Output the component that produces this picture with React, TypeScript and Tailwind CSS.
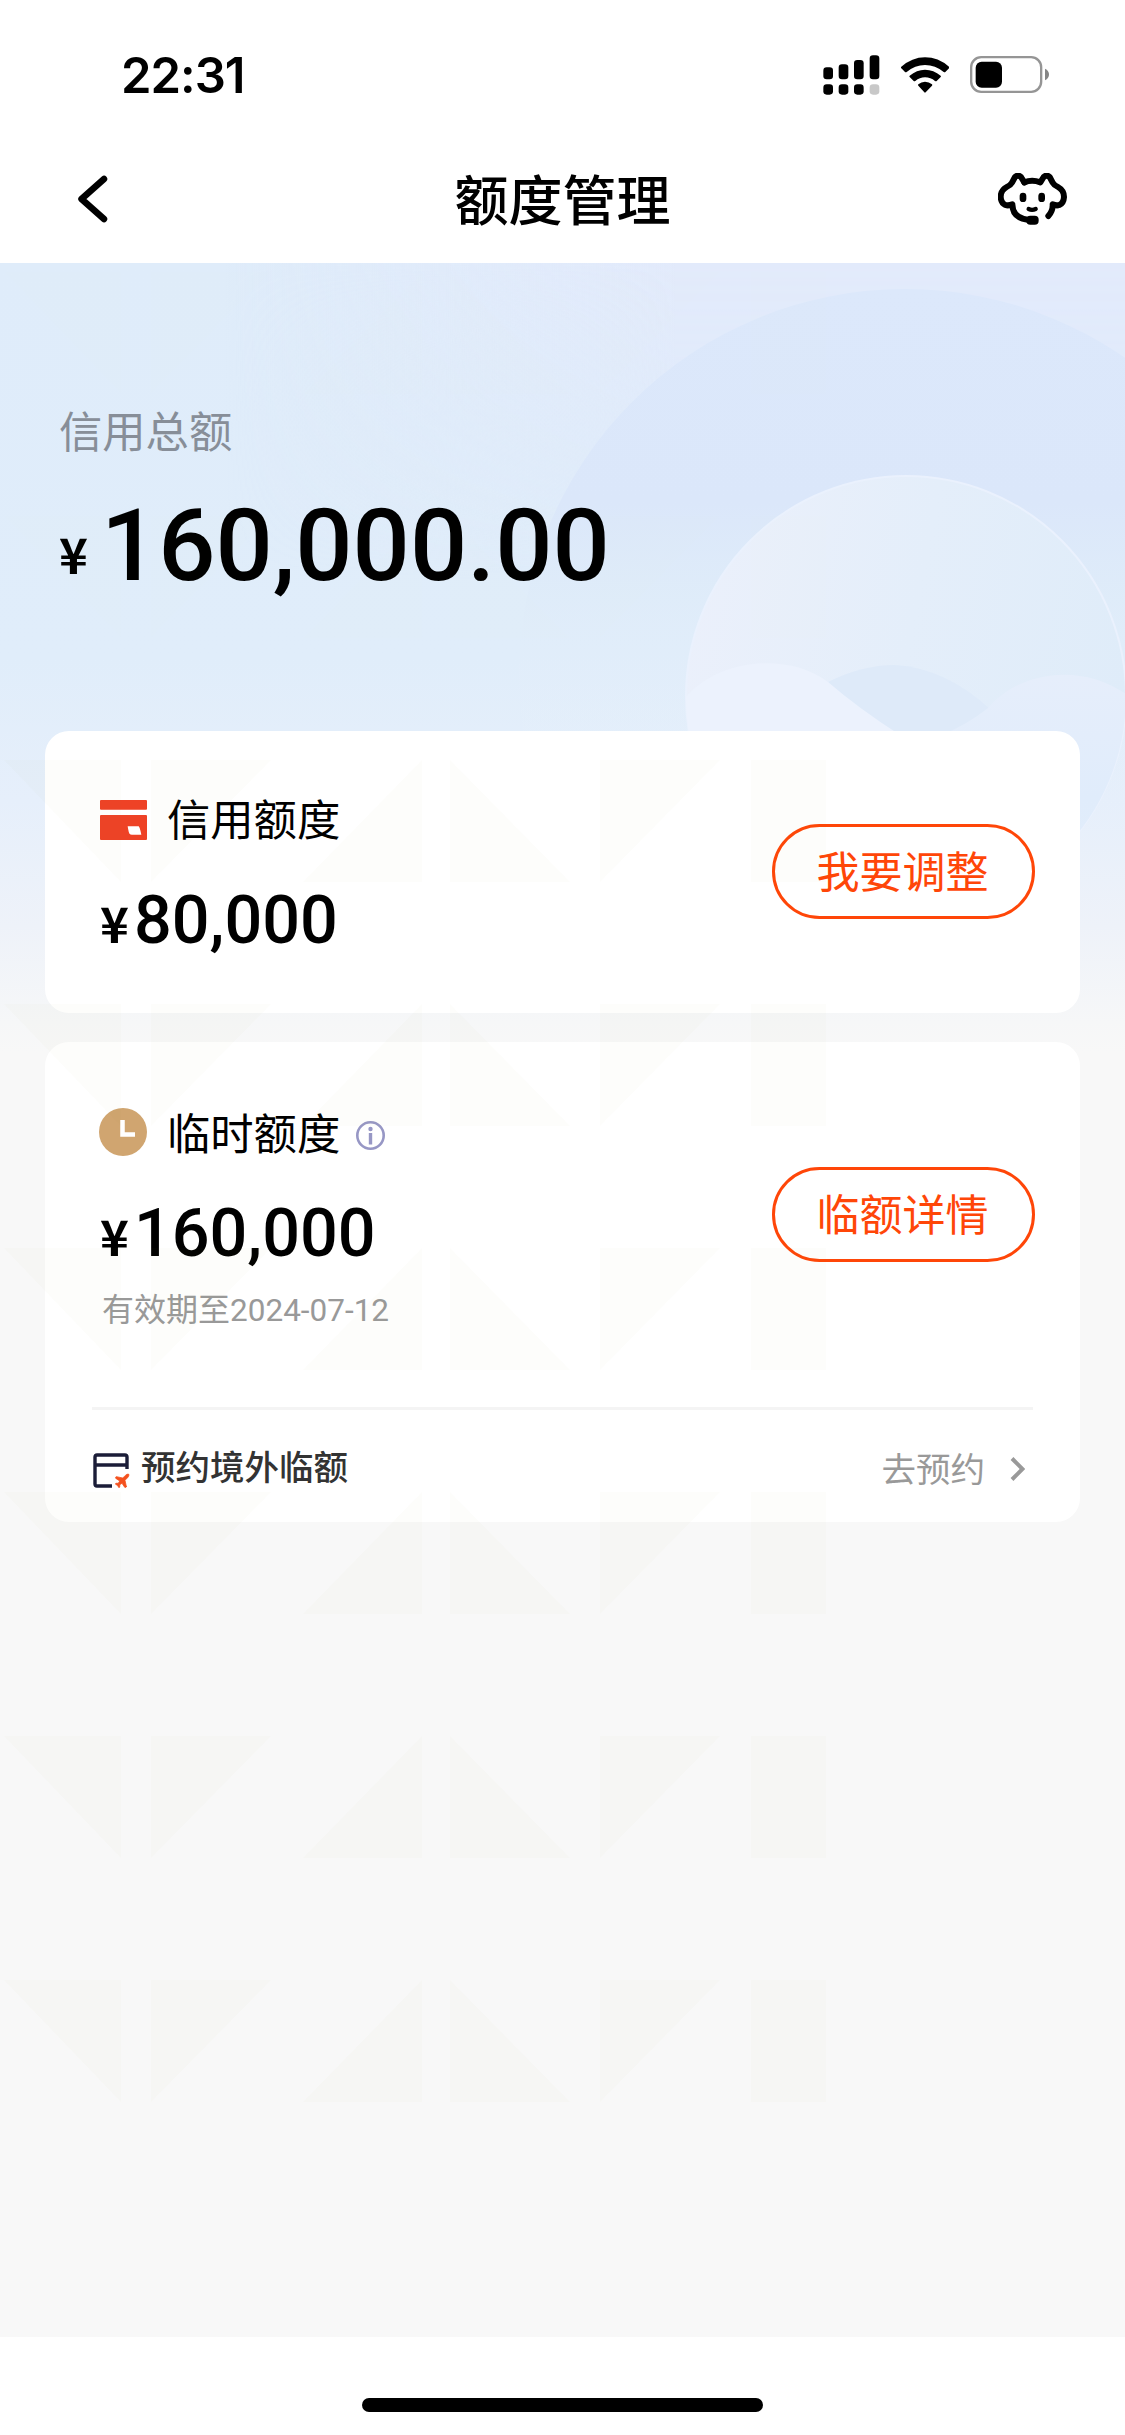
import { Plane } from "lucide-react";

// the first two rows sit on the blue hero and are fainter there
const watermarkRows = [272, 516, 760, 1004, 1248, 1492, 1736, 1980];

function SignalIcon() {
  return (
    <svg className="h-10 w-[57px]" viewBox="128 74 171 120">
      <rect x="129" y="111" width="29" height="36" rx="10" />
      <rect x="175" y="102" width="29" height="45" rx="10" />
      <rect x="221" y="89" width="29" height="58" rx="10" />
      <rect x="268" y="75" width="29" height="72" rx="10" />
      <rect x="129" y="162" width="29" height="31" rx="10" />
      <rect x="175" y="162" width="29" height="31" rx="10" />
      <rect x="221" y="162" width="29" height="31" rx="10" />
      <rect x="268" y="162" width="29" height="31" rx="10" fill="#c8c8c8" />
    </svg>
  );
}

function WifiIcon() {
  return (
    <svg className="h-9 w-12" viewBox="361 79 144 108">
      <path d="M361 109Q394 80 433 80Q473 80 506 109Q507 111 505 113L494 124Q492 126 489 124Q464 103 433 103Q403 103 378 124Q375 126 373 124L362 113Q360 111 361 109Z" />
      <path d="M387 135Q408 117 433 117Q459 117 480 135Q482 137 480 139L468 151Q466 153 463 151Q450 140 433 140Q417 140 404 151Q401 153 399 151L387 139Q385 137 387 135Z" />
      <path d="M413 161Q422 153 433 153Q445 153 454 161Q456 163 454 165L435 185Q433 187 431 185L413 165Q411 163 413 161Z" />
    </svg>
  );
}

function BatteryIcon() {
  return (
    <svg className="h-[37px] w-[79px]" viewBox="570 78 237 111">
      <rect
        x="573.500"
        y="81.500"
        width="210"
        height="104"
        rx="30"
        fill="none"
        stroke="#959595"
        strokeWidth="7"
      />
      <rect x="587" y="95" width="79" height="78" rx="18" />
      <path d="M795 116Q807 122 807 133Q807 145 795 151Z" fill="#858585" />
    </svg>
  );
}

function PuppyIcon() {
  return (
    <svg
      className="h-[52px] w-[69px]"
      viewBox="655 430 207 156"
      fill="none"
      stroke="black"
      strokeWidth="18"
      strokeLinecap="round"
      strokeLinejoin="round"
    >
      <path d="M734 458Q757 449 782 458L792 442Q801 434 810 442L819 459Q824 468 835 472Q853 482 853 502Q852 520 839 526Q830 529 819 524Q820 543 806 559" />
      <path d="M734 458L724 442Q715 434 706 442L697 459Q692 468 681 472Q663 482 663 502Q664 520 677 526Q687 529 698 524Q698 566 748 571" />
      <rect x="740" y="558" width="37" height="27" rx="12" fill="black" stroke="none" />
      <rect x="720" y="489" width="20" height="28" rx="10" fill="black" stroke="none" />
      <rect x="776" y="489" width="20" height="28" rx="10" fill="black" stroke="none" />
      <path d="M747 538Q757 543 768 538" strokeWidth="13" />
    </svg>
  );
}

function CreditCardIcon() {
  return (
    <svg className="h-10 w-[47px]" viewBox="0 0 141 120" fill="#ee4226">
      <rect width="141" height="29" rx="3" />
      <path d="M3 45H138Q141 45 141 48V117Q141 120 138 120H3Q0 120 0 117V48Q0 45 3 45ZM83 79Q86 99 89 102Q91 104 96 104H124Q119 80 116 79Z" fillRule="evenodd" />
    </svg>
  );
}

function ClockIcon() {
  return (
    <svg className="size-12" viewBox="0 0 48 48">
      <circle cx="24" cy="24" r="24" fill="#d0a570" />
      <path d="M23.500 12V26.500H36" fill="none" stroke="white" strokeWidth="4.500" />
    </svg>
  );
}

function InfoIcon() {
  return (
    <svg className="size-[29px]" viewBox="0 0 29 29">
      <circle cx="14.500" cy="14.500" r="13.200" fill="none" stroke="#9797c5" strokeWidth="2.600" />
      <circle cx="14.500" cy="8" r="2.200" fill="#9797c5" />
      <path d="M14.500 12V23.500" stroke="#9797c5" strokeWidth="3.400" />
    </svg>
  );
}

function AbroadIcon() {
  return (
    <span className="relative mt-[10px] ml-px size-[37px]">
      <svg className="size-[37px]" viewBox="0 0 37 37" fill="none" stroke="#1b1d38" strokeWidth="3.400">
        <path d="M34 16V4Q34 2 32 2H4Q2 2 2 4V31Q2 33 4 33H19M2 12H34" />
      </svg>
      <Plane className="absolute top-[19px] left-5 size-[18px] fill-[#f4511e] text-[#f4511e]" strokeWidth={1} />
    </span>
  );
}

function HeroArt() {
  return (
    <svg className="absolute inset-x-0 top-0 h-[790px] w-full" viewBox="0 263 1125 790">
      <defs>
        <linearGradient id="base" x1="0" x2="0" y1="0" y2="1">
          <stop offset="0" stopColor="#dfecfa" />
          <stop offset="0.5" stopColor="#e0edfa" />
          <stop offset="0.68" stopColor="#e6effb" />
          <stop offset="0.84" stopColor="#eef2f9" />
          <stop offset="0.96" stopColor="#f6f7f8" />
          <stop offset="1" stopColor="#f8f8f8" />
        </linearGradient>
        <linearGradient id="tint" x1="0" x2="1" y1="0" y2="0">
          <stop offset="0.2" stopColor="#e2eafb" stopOpacity="0" />
          <stop offset="0.6" stopColor="#e2eafb" />
        </linearGradient>
        <linearGradient id="tintFade" x1="0" x2="0" y1="0" y2="1">
          <stop offset="0" stopColor="white" />
          <stop offset="0.4" stopColor="black" />
        </linearGradient>
        <mask id="tintMask">
          <rect y="263" width="1125" height="790" fill="url(#tintFade)" />
        </mask>
        <linearGradient id="halo" x1="0" x2="0" y1="289" y2="1000" gradientUnits="userSpaceOnUse">
          <stop offset="0" stopColor="#dce8fb" />
          <stop offset="0.3" stopColor="#dbe7fa" />
          <stop offset="0.42" stopColor="#deebf9" stopOpacity="0.8" />
          <stop offset="0.6" stopColor="#e4effb" stopOpacity="0.3" />
          <stop offset="0.75" stopColor="#eaf1fb" stopOpacity="0" />
        </linearGradient>
        <linearGradient id="orb" x1="0" x2="1" y1="0.3" y2="0.5">
          <stop offset="0" stopColor="#ebf0fb" />
          <stop offset="0.5" stopColor="#e4eefa" />
          <stop offset="1" stopColor="#dfecf9" />
        </linearGradient>
        <linearGradient id="rightHill" x1="0" x2="0" y1="0" y2="1">
          <stop offset="0" stopColor="#e6eefb" />
          <stop offset="0.5" stopColor="#e0ecfb" />
          <stop offset="1" stopColor="#e3eefa" />
        </linearGradient>
        <clipPath id="orbClip">
          <circle cx="906" cy="696" r="220" />
        </clipPath>
      </defs>
      <rect y="263" width="1125" height="790" fill="url(#base)" />
      <rect y="263" width="1125" height="790" fill="url(#tint)" mask="url(#tintMask)" />
      <circle cx="905" cy="675" r="386" fill="url(#halo)" />
      <circle cx="906" cy="696" r="220" fill="url(#orb)" stroke="#eaf1fd" strokeWidth="2" />
      <g clipPath="url(#orbClip)">
        <path d="M828 682Q862 665 895 665Q945 668 990 709L960 745H880Z" fill="#deeaf9" />
        <path d="M680 705C710 660 785 650 828 682Q858 708 900 735V920H680Z" fill="#ecf2fd" />
        <path d="M942 735Q968 724 988 708C1020 670 1085 662 1130 697V920H942Z" fill="url(#rightHill)" />
      </g>
    </svg>
  );
}

function Watermark() {
  return (
    <svg
      className="pointer-events-none absolute inset-x-0 top-0 h-[2336px] w-full"
      viewBox="0 0 1125 2336"
      fill="#949430"
    >
      {watermarkRows.map((y, index) => (
        <path
          key={y}
          transform={`translate(0 ${y})`}
          fillOpacity={index < 2 ? 0.005 : 0.018}
          d="M4 0H121V122ZM151 0H271L151 122ZM422 0V122H303ZM450 0V122H570ZM600 0H720L600 122ZM751 0H826V122H751Z"
        />
      ))}
    </svg>
  );
}

function PillButton({ label }: { label: string }) {
  return (
    <button className="h-[95px] w-[263px] rounded-full border-3 border-[#ff4608] pr-[2px] pb-[5px] text-[43px] leading-none text-[#ff4608]">
      {label}
    </button>
  );
}

function Amount({ value }: { value: string }) {
  return (
    <div className="flex h-[66px] items-baseline text-black">
      <span className="mr-[5px] text-[49px] leading-[66px] font-bold">¥</span>
      <span className="font-[Roboto] text-[66.500px] leading-[66px] font-medium">{value}</span>
    </div>
  );
}

export default function App() {
  return (
    <div className="relative flex h-[2435px] w-[1125px] flex-col overflow-hidden bg-white font-['Noto_Sans_CJK_SC',sans-serif]">
      <header className="h-[263px]">
        <div className="flex h-[150px] items-center justify-between pr-[76px] pl-[121px]">
          <span className="pt-px font-[Inter] text-[49px] font-semibold tracking-[-1px]">22:31</span>
          <div className="flex items-center gap-[21px] pb-px">
            <SignalIcon />
            <WifiIcon />
            <BatteryIcon />
          </div>
        </div>
        <div className="grid h-[98px] grid-cols-[1fr_auto_1fr] items-center pr-[58px] pl-[77px]">
          <svg className="h-12 w-8" viewBox="0 0 32 48" fill="none" stroke="black" strokeWidth="6.500" strokeLinecap="round" strokeLinejoin="round">
            <path d="M27 4L4.500 24L27 44" />
          </svg>
          <h1 className="-ml-[19px] pb-[3px] text-[54px] leading-none font-medium">额度管理</h1>
          <span className="justify-self-end">
            <PuppyIcon />
          </span>
        </div>
      </header>

      <main className="relative h-[2074px] bg-[#f8f8f8] px-[45px]">
        <HeroArt />
        <section className="relative h-[468px] px-[14px] pt-[144px]">
          <p className="text-[43.300px] leading-[44px] text-[#878e98]">信用总额</p>
          <div className="mt-[45px] flex items-baseline">
            <span className="mr-[13px] text-[49px] leading-[84px] font-bold">
              <span className="relative -top-[6px]">¥</span>
            </span>
            <span className="font-[Roboto] text-[100.800px] leading-[100px] font-medium">160,000.00</span>
          </div>
        </section>

        <section className="relative flex h-[282px] items-center justify-between rounded-[24px] bg-white pr-[45px] pl-[55px]">
          <div className="pt-[8px]">
            <div className="flex items-center gap-5">
              <CreditCardIcon />
              <h2 className="-mt-[7px] text-[43.300px] leading-[48px]">信用额度</h2>
            </div>
            <div className="mt-[46px]">
              <Amount value="80,000" />
            </div>
          </div>
          <div className="pb-px">
            <PillButton label="我要调整" />
          </div>
        </section>

        <section className="relative mt-[29px] h-[480px] rounded-[24px] bg-white">
          <div className="flex h-[365px] justify-between pr-[45px] pl-[54px]">
            <div className="pt-[66px]">
              <div className="flex items-center">
                <ClockIcon />
                <h2 className="-mt-[3px] ml-5 text-[43.300px] leading-[48px]">临时额度</h2>
                <span className="mt-[6px] ml-4">
                  <InfoIcon />
                </span>
              </div>
              <div className="mt-[44px] ml-px">
                <Amount value="160,000" />
              </div>
              <p className="mt-[17px] ml-[3px] text-[32px] leading-[48px] text-[#999]">
                有效期至<span className="font-[Roboto] text-[31.500px]">2024-07-12</span>
              </p>
            </div>
            <div className="pt-[125px]">
              <PillButton label="临额详情" />
            </div>
          </div>
          <div className="mx-[47px] flex h-[115px] items-center border-t-3 border-[#f4f4f4]">
            <AbroadIcon />
            <span className="ml-[11px] text-[34.500px] font-medium text-[#333]">预约境外临额</span>
            <span className="mt-1 mr-[25px] ml-auto text-[34.500px] text-[#999]">去预约</span>
            <svg className="mt-[5px] mr-2 h-6 w-[15px]" viewBox="0 0 15 24" fill="none" stroke="#999" strokeWidth="4">
              <path d="M2 1.500L12.500 12L2 22.500" />
            </svg>
          </div>
        </section>
      </main>

      <footer className="flex flex-1 justify-center pt-[61px]">
        <div className="h-[14px] w-[401px] rounded-full bg-black" />
      </footer>
      <Watermark />
    </div>
  );
}
